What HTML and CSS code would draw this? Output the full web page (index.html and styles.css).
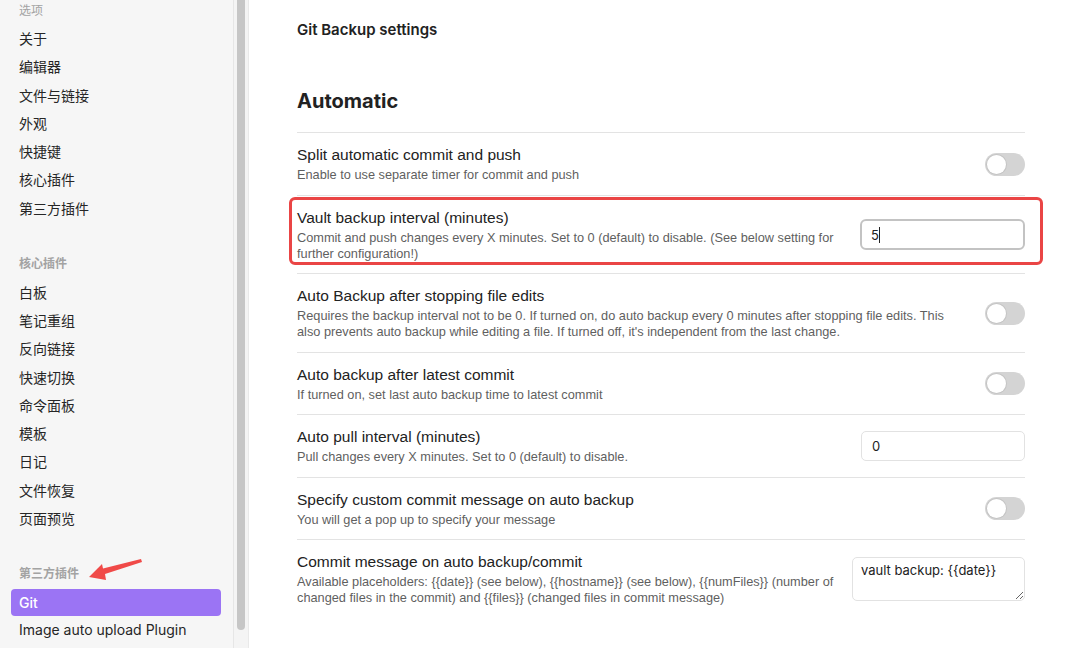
FILE: index.html
```html
<!DOCTYPE html>
<html lang="zh">
<head>
<meta charset="utf-8">
<link rel="stylesheet" href="styles.css">
</head>
<body>
<div class="app">
  <nav class="sidebar">
    <div class="group-title first">选项</div>
    <div class="nav-item">关于</div>
    <div class="nav-item">编辑器</div>
    <div class="nav-item">文件与链接</div>
    <div class="nav-item">外观</div>
    <div class="nav-item">快捷键</div>
    <div class="nav-item">核心插件</div>
    <div class="nav-item">第三方插件</div>
    <div class="group-title">核心插件</div>
    <div class="nav-item">白板</div>
    <div class="nav-item">笔记重组</div>
    <div class="nav-item">反向链接</div>
    <div class="nav-item">快速切换</div>
    <div class="nav-item">命令面板</div>
    <div class="nav-item">模板</div>
    <div class="nav-item">日记</div>
    <div class="nav-item">文件恢复</div>
    <div class="nav-item">页面预览</div>
    <div class="group-title">第三方插件</div>
    <div class="nav-item active">Git</div>
    <div class="nav-item">Image auto upload Plugin</div>
  </nav>
  <div class="gutter"><div class="thumb"></div></div>
  <main class="content">
    <div class="page-title">Git Backup settings</div>
    <h2 class="section-title">Automatic</h2>

    <div class="setting">
      <div class="info">
        <div class="name">Split automatic commit and push</div>
        <div class="desc">Enable to use separate timer for commit and push</div>
      </div>
      <div class="toggle"><span class="knob"></span></div>
    </div>

    <div class="setting highlighted">
      <div class="info">
        <div class="name">Vault backup interval (minutes)</div>
        <div class="desc">Commit and push changes every X minutes. Set to 0 (default) to disable. (See below setting for further configuration!)</div>
      </div>
      <div class="text-input focused">5<span class="caret"></span></div>
      <div class="mark-box"></div>
    </div>

    <div class="setting">
      <div class="info">
        <div class="name">Auto Backup after stopping file edits</div>
        <div class="desc">Requires the backup interval not to be 0. If turned on, do auto backup every 0 minutes after stopping file edits. This also prevents auto backup while editing a file. If turned off, it's independent from the last change.</div>
      </div>
      <div class="toggle"><span class="knob"></span></div>
    </div>

    <div class="setting">
      <div class="info">
        <div class="name">Auto backup after latest commit</div>
        <div class="desc">If turned on, set last auto backup time to latest commit</div>
      </div>
      <div class="toggle"><span class="knob"></span></div>
    </div>

    <div class="setting">
      <div class="info">
        <div class="name">Auto pull interval (minutes)</div>
        <div class="desc">Pull changes every X minutes. Set to 0 (default) to disable.</div>
      </div>
      <div class="text-input">0</div>
    </div>

    <div class="setting">
      <div class="info">
        <div class="name">Specify custom commit message on auto backup</div>
        <div class="desc">You will get a pop up to specify your message</div>
      </div>
      <div class="toggle"><span class="knob"></span></div>
    </div>

    <div class="setting">
      <div class="info">
        <div class="name">Commit message on auto backup/commit</div>
        <div class="desc">Available placeholders: {{date}} (see below), {{hostname}} (see below), {{numFiles}} (number of changed files in the commit) and {{files}} (changed files in commit message)</div>
      </div>
      <textarea class="text-area">vault backup: {{date}}</textarea>
    </div>
  </main>
</div>
<svg class="arrow" width="1065" height="648" viewBox="0 0 1065 648">
  <polygon points="89,577 102,564 103,568.5 141,559 142,562 105,574 106,580" fill="#f04a48"/>
</svg>
</body>
</html>
```
FILE: styles.css
```css
* { box-sizing: border-box; }
html, body { margin: 0; padding: 0; }
body {
  width: 1065px;
  height: 648px;
  overflow: hidden;
  background: #ffffff;
  font-family: Inter, "Noto Sans CJK SC", sans-serif;
  color: #222222;
  position: relative;
}
.app {
  display: flex;
  height: 648px;
}
.sidebar {
  width: 234px;
  flex: none;
  background: #f6f6f6;
  border-right: 1px solid #e6e6e6;
  padding: 3px 12px 0 11px;
  font-family: Inter, "Noto Sans CJK SC", sans-serif;
}
.group-title {
  font-size: 12px;
  line-height: 16px;
  color: #a3a3a3;
  font-weight: 600;
  padding: 33px 8px 7px;
}
.group-title.first {
  padding-top: 0;
  padding-bottom: 6px;
  font-weight: 400;
}
.nav-item {
  font-size: 14px;
  line-height: 28.25px;
  padding: 0 8px;
  color: #262626;
  border-radius: 4px;
}
.nav-item.active {
  background: #9b74f4;
  color: #ffffff;
  font-weight: 500;
  line-height: 27px;
}
.gutter {
  width: 15px;
  flex: none;
  background: #f4f4f4;
  border-right: 1px solid #e9e9e9;
  padding: 0 3px 0 3px;
}
.thumb {
  width: 8px;
  height: 636px;
  margin-top: -6px;
  background: #c6c6c6;
  border-radius: 4px;
}
.content {
  flex: 1;
  padding: 0 40px 0 48px;
  font-family: "Liberation Sans", Arial, sans-serif;
}
.page-title {
  font-family: Inter, sans-serif;
  font-size: 15px;
  font-weight: 600;
  line-height: 20px;
  margin-top: 20px;
}
.section-title {
  font-family: Inter, sans-serif;
  font-size: 20px;
  font-weight: 700;
  line-height: 26px;
  margin: 48px 0 18px;
}
.setting {
  position: relative;
  display: flex;
  align-items: center;
  border-top: 1px solid #e3e3e3;
  padding: 12px 0 11.5px;
  gap: 16px;
}
.info {
  flex: 1;
  min-width: 0;
}
.name {
  font-size: 15.5px;
  line-height: 20px;
  color: #222222;
}
.desc {
  font-size: 12.75px;
  line-height: 16px;
  color: #5f5f5f;
  margin-top: 2px;
}
.toggle {
  width: 40px;
  height: 23px;
  flex: none;
  border-radius: 12px;
  background: #d4d4d4;
  padding: 2px;
}
.knob {
  display: block;
  width: 19px;
  height: 19px;
  border-radius: 50%;
  background: #ffffff;
  box-shadow: 0 0 0 1px #c4c4c4;
}
.text-input {
  width: 164px;
  height: 30px;
  flex: none;
  border: 1px solid #e2e2e2;
  border-radius: 5px;
  font-family: Inter, sans-serif;
  font-size: 13px;
  line-height: 28px;
  padding: 0 10px;
  color: #222;
  display: flex;
  align-items: center;
}
.text-input.focused {
  width: 165px;
  height: 31px;
  border: 2px solid #c3c3c3;
  border-radius: 6px;
  padding: 0 9px;
}
.caret {
  display: inline-block;
  width: 1px;
  height: 16px;
  background: #222;
}
.text-area {
  width: 173px;
  height: 44px;
  flex: none;
  border: 1px solid #e2e2e2;
  border-radius: 5px;
  font-family: Inter, sans-serif;
  font-size: 13px;
  line-height: 16px;
  padding: 4px 8px;
  color: #222;
  resize: both;
  background: #fff;
}
.mark-box {
  position: absolute;
  left: -8px;
  right: -18px;
  top: 1px;
  bottom: 8px;
  border: 3px solid #ea4545;
  border-radius: 6px;
  pointer-events: none;
}
.arrow {
  position: absolute;
  left: 0;
  top: 0;
  pointer-events: none;
}
```
